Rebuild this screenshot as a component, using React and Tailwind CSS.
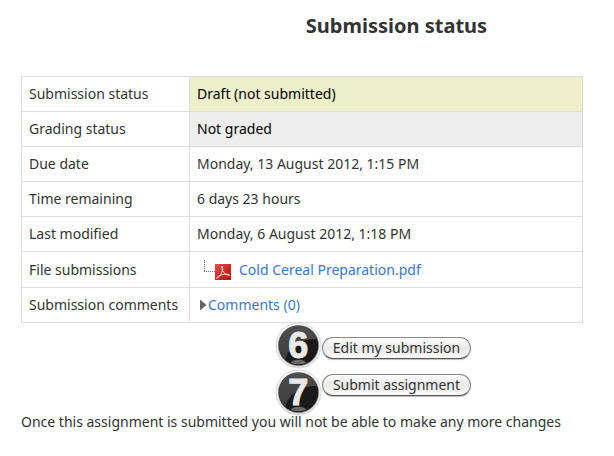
const rows = [
  { label: 'Submission status', value: 'Draft (not submitted)', cell: 'bg-[#eeefcb] text-black' },
  { label: 'Grading status', value: 'Not graded', cell: 'bg-[#eeeeee] text-black' },
  { label: 'Due date', value: 'Monday, 13 August 2012, 1:15 PM' },
  { label: 'Time remaining', value: '6 days 23 hours' },
  { label: 'Last modified', value: 'Monday, 6 August 2012, 1:18 PM' },
];

function PdfIcon() {
  return (
    <svg width="16" height="16" viewBox="0 0 16 16" aria-hidden="true">
      <defs>
        <linearGradient id="pdf" x1="0" y1="0" x2="1" y2="1">
          <stop offset="0" stopColor="#e0524c" />
          <stop offset="0.5" stopColor="#cf2a26" />
          <stop offset="1" stopColor="#b81512" />
        </linearGradient>
      </defs>
      <rect width="16" height="16" fill="url(#pdf)" />
      <path
        d="M7 2c-.6 1.500.2 4.600 1.800 6.500 1.500 1.800 4 3 6 2.800-1.300-1.400-5-1.500-8-.5-2.400.8-4.800 2-5.200 3.400 1.800-.2 4.100-3.200 5.400-6.400.8-2.300.9-4.800 0-5.800z"
        fill="none"
        stroke="#fbe9e7"
        strokeWidth="0.900"
      />
    </svg>
  );
}

function TreeLine() {
  return (
    <svg width="11" height="12" viewBox="0 0 11 12" aria-hidden="true">
      <path d="M0.500 0v11M0 11.500h11" fill="none" stroke="#777" strokeDasharray="1 1" />
    </svg>
  );
}

function StepBadge({ number }) {
  return (
    <span className="relative flex size-[47px] items-center justify-center">
      <svg className="absolute inset-0" width="47" height="47" viewBox="0 0 48 48" aria-hidden="true">
        <defs>
          <linearGradient id={`rim${number}`} x1="0" y1="0" x2="0" y2="1">
            <stop offset="0" stopColor="#f6f6f6" />
            <stop offset="0.7" stopColor="#ececec" />
            <stop offset="1" stopColor="#dadada" />
          </linearGradient>
          <linearGradient id={`gloss${number}`} x1="0" y1="0" x2="0" y2="1">
            <stop offset="0" stopColor="#4e4e4e" />
            <stop offset="1" stopColor="#3c3c3c" />
          </linearGradient>
        </defs>
        <circle cx="24" cy="24" r="23" fill={`url(#rim${number})`} stroke="#d9d9d9" />
        <circle cx="24" cy="24" r="20.500" fill="#1a1a1a" stroke="#777" strokeWidth="0.600" />
        <path d="M10.500 38.500C14 27 24 17 43 17.500A20 20 0 1 0 10.500 38.500z" fill={`url(#gloss${number})`} />
        <path d="M16 41.500C18 37.500 30 37.500 32 41.500Q24 45 16 41.500z" fill="#6a6a6a" />
      </svg>
      <span className="relative font-['Liberation_Sans',sans-serif] text-[36px] leading-none font-bold text-[#e9e9e9] [-webkit-text-stroke:1px_#e9e9e9]">
        {number}
      </span>
    </span>
  );
}

function ActionButton({ children }) {
  return (
    <button
      type="button"
      className="h-[22px] rounded-full border border-[#888] border-b-[#555] bg-linear-to-b from-white via-[#e9e9e9] to-[#fafafa] px-[10px] text-sm leading-5 text-[#333] shadow-[0_1px_1px_#bbb]"
    >
      {children}
    </button>
  );
}

export default function App() {
  return (
    <main className="min-h-screen bg-white pr-[31px] pl-[21px] font-['Noto_Sans',sans-serif] text-sm text-[#333]">
      <h2 className="pt-3 pb-9 pl-[189px] text-center text-xl leading-7 font-bold">Submission status</h2>

      <table className="w-full border-collapse border border-[#dddddd] text-left">
        <tbody>
          {rows.map((row) => (
            <tr key={row.label} className="h-[35px]">
              <th scope="row" className="w-[168px] border border-[#dddddd] px-[7px] font-normal whitespace-nowrap">
                {row.label}
              </th>
              <td className={`border border-[#dddddd] px-[7px] ${row.cell || ''}`}>{row.value}</td>
            </tr>
          ))}
          <tr className="h-9">
            <th scope="row" className="border border-[#dddddd] px-[7px] font-normal">File submissions</th>
            <td className="border border-[#dddddd] px-[7px]">
              <div className="flex items-center pl-[7px]">
                <div className="flex items-start">
                  <TreeLine />
                  <span className="pt-1">
                    <PdfIcon />
                  </span>
                </div>
                <a href="#file" className="ml-2 text-[#3c78c8]">Cold Cereal Preparation.pdf</a>
              </div>
            </td>
          </tr>
          <tr className="h-[35px]">
            <th scope="row" className="border border-[#dddddd] px-[7px] font-normal whitespace-nowrap">
              Submission comments
            </th>
            <td className="border border-[#dddddd] px-[7px]">
              <a href="#comments" className="flex items-center pl-[3px] text-[#3c78c8]">
                <svg width="8" height="12" viewBox="0 0 8 12" aria-hidden="true">
                  <path d="M0 0.500L6.500 6L0 11.500z" fill="#666" />
                </svg>
                Comments (0)
              </a>
            </td>
          </tr>
        </tbody>
      </table>

      <div className="flex justify-center pt-[14px] pl-[189px]">
        <div className="relative z-10 flex flex-col items-center gap-[15px]">
          <div className="absolute -top-[15px] right-full">
            <StepBadge number="6" />
            <StepBadge number="7" />
          </div>
          <ActionButton>Edit my submission</ActionButton>
          <ActionButton>Submit assignment</ActionButton>
        </div>
      </div>

      <p className="mt-4 whitespace-nowrap">
        Once this assignment is submitted you will not be able to make any more changes
      </p>
    </main>
  );
}
